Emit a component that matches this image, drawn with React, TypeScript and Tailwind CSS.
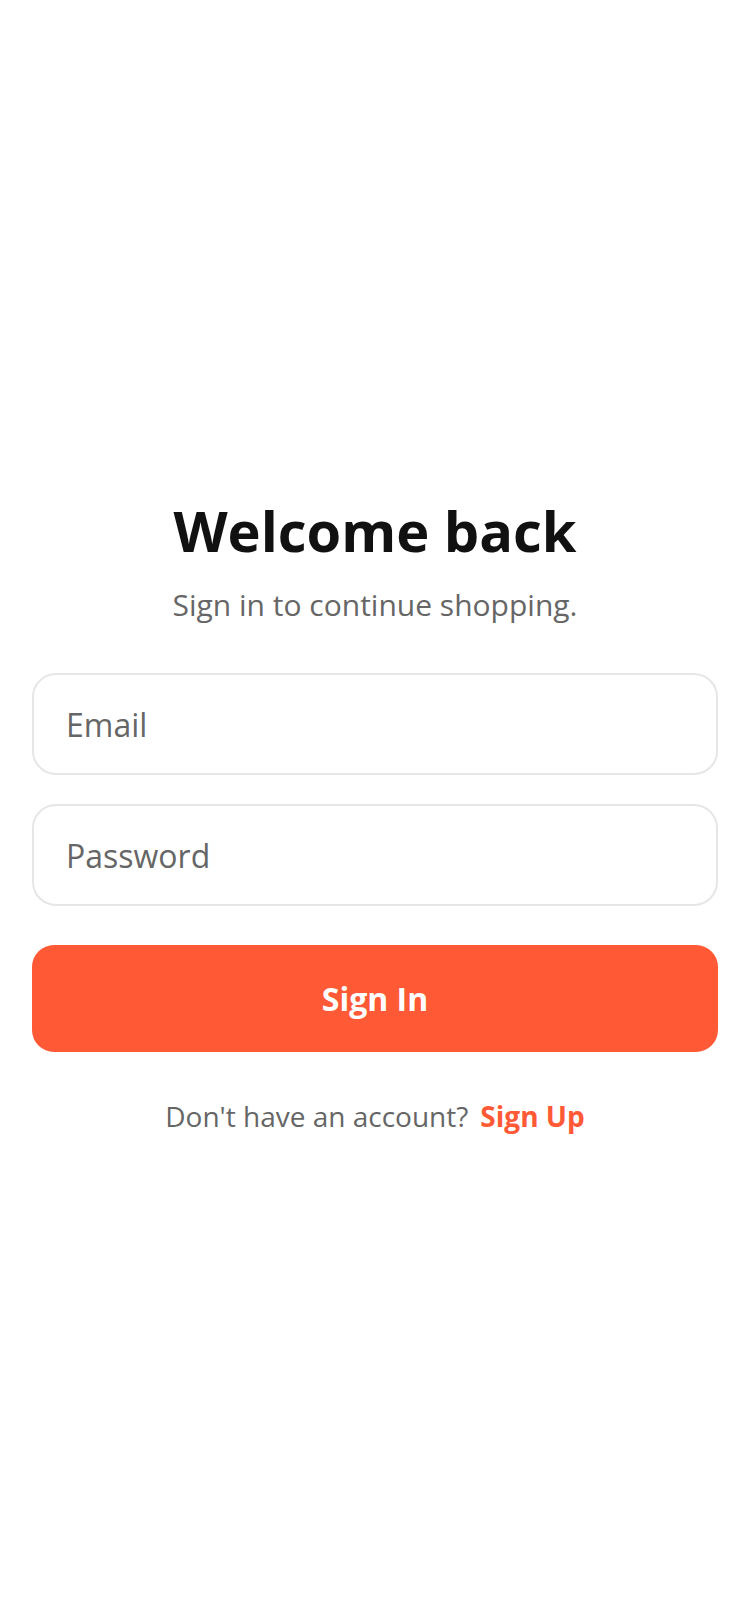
export default function App() {
  return (
    <div
      className="min-h-screen w-full bg-white px-8 pt-[495px]"
      style={{ fontFamily: '"Open Sans", "Noto Sans", sans-serif' }}
    >
      <h1 className="text-center text-[56px] font-bold leading-[70px] text-[#111111]">
        Welcome back
      </h1>
      <p className="mt-[19px] text-center text-[30px] leading-[42px] text-[#666666]">
        Sign in to continue shopping.
      </p>

      <form className="mt-[47px] flex flex-col gap-[29px]" onSubmit={e => e.preventDefault()}>
        <input
          type="email"
          placeholder="Email"
          className="h-[102px] w-full rounded-[24px] border-2 border-[#e6e6e6] bg-white px-[32px] text-[32px] text-[#111] outline-none placeholder:text-[#666666]"
        />
        <input
          type="password"
          placeholder="Password"
          className="h-[102px] w-full rounded-[24px] border-2 border-[#e6e6e6] bg-white px-[32px] text-[32px] text-[#111] outline-none placeholder:text-[#666666]"
        />
        <button
          type="submit"
          className="mt-[10px] h-[107px] w-full rounded-[22px] bg-[#ff5a35] text-[32px] font-bold text-white"
        >
          Sign In
        </button>
      </form>

      <div className="mt-[46px] flex items-center justify-center gap-[12px] text-[28px] leading-[36px]">
        <span className="text-[#666666]">Don't have an account?</span>
        <a href="#" className="font-bold text-[#ff5a35]">
          Sign Up
        </a>
      </div>
    </div>
  )
}
